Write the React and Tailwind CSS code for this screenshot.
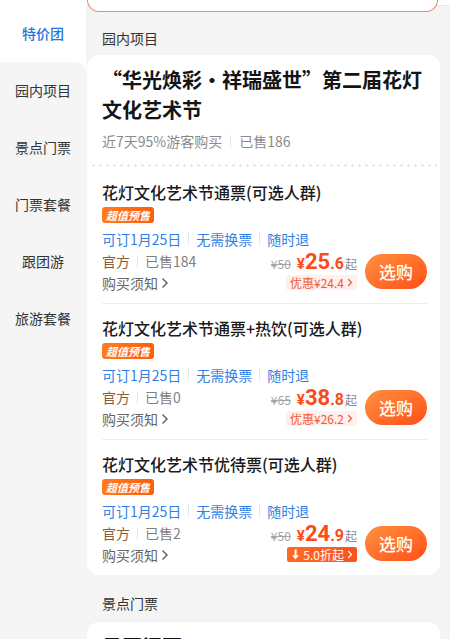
const font = "font-['Noto_Sans_CJK_SC','Noto_Sans',sans-serif]";

const menu = ['特价团', '园内项目', '景点门票', '门票套餐', '跟团游', '旅游套餐'];

const tickets = [
  { title: '花灯文化艺术节通票(可选人群)', sold: 184, orig: 50, int: '25', dec: '.6', deal: 'save', dealText: '优惠¥24.4' },
  { title: '花灯文化艺术节通票+热饮(可选人群)', sold: 0, orig: 65, int: '38', dec: '.8', deal: 'save', dealText: '优惠¥26.2' },
  { title: '花灯文化艺术节优待票(可选人群)', sold: 2, orig: 50, int: '24', dec: '.9', deal: 'off', dealText: '5.0折起' },
];

function Chevron({ className = '' }) {
  return (
    <svg viewBox="0 0 8 12" className={className} fill="none" stroke="currentColor" strokeWidth="1.6" strokeLinecap="round" strokeLinejoin="round">
      <path d="M2 2l4 4-4 4" />
    </svg>
  );
}

function Sidebar() {
  return (
    <div className="w-[86px] shrink-0 bg-white pt-[5px] flex flex-col">
      <div className="h-[57px] flex items-center justify-center text-[14px] font-medium text-[#1f76e0]">{menu[0]}</div>
      <div className="flex-1 bg-[#f5f5f5] rounded-tr-[12px]">
        {menu.slice(1).map((m) => (
          <div key={m} className="h-[57px] flex items-center justify-center text-[14px] text-[#333333]">{m}</div>
        ))}
      </div>
    </div>
  );
}

function Ticket({ t, last }) {
  return (
    <div className={last ? 'pt-[13px] pb-[9px]' : 'pt-[13px] pb-[9px] border-b border-[#eeeeee]'}>
      <div className="text-[16px] leading-[22px] font-medium text-[#1a1a1a]">{t.title}</div>
      <div className="mt-[4px] flex">
        <span className="h-[16px] px-[4px] rounded-[3px] bg-gradient-to-r from-[#ff7c1e] to-[#ff5c08] text-white text-[11px] leading-[16px] font-bold italic">超值预售</span>
      </div>
      <div className="mt-[6px] flex items-center text-[14px] leading-[20px] text-[#2f7fe4]">
        <span>可订1月25日</span>
        <span className="mx-[7px] w-px h-[12px] bg-[#dfe7f1]" />
        <span>无需换票</span>
        <span className="mx-[7px] w-px h-[12px] bg-[#dfe7f1]" />
        <span>随时退</span>
      </div>
      <div className="mt-[1px] flex items-start">
        <div className="flex-1 text-[14px] leading-[22px]">
          <div className="flex items-center">
            <span className="text-[#8d5c3a]">官方</span>
            <span className="mx-[7px] w-px h-[12px] bg-[#e2e2e2]" />
            <span className="text-[#808080]">已售{t.sold}</span>
          </div>
          <div className="flex items-center text-[#666666]">
            <span>购买须知</span>
            <Chevron className="w-[8px] h-[12px] ml-[3px]" />
          </div>
        </div>
        <div className="mt-[1px] flex flex-col items-end">
          <div className="flex items-baseline leading-[22px]">
            <span className="text-[12px] text-[#a3a3a3] line-through mr-[6px]">¥{t.orig}</span>
            <span className="font-['Roboto','Noto_Sans_CJK_SC',sans-serif] font-bold text-[#fd4a17] text-[15px]">¥</span>
            <span className="font-['Roboto','Noto_Sans_CJK_SC',sans-serif] font-bold text-[#fd4a17] text-[22px]">{t.int}</span>
            <span className="font-['Roboto','Noto_Sans_CJK_SC',sans-serif] font-bold text-[#fd4a17] text-[16px]">{t.dec}</span>
            <span className="text-[12px] text-[#8a8a8a] ml-[1px]">起</span>
          </div>
          {t.deal === 'save' ? (
            <div className="flex items-center h-[15px] px-[4px] rounded-[2px] bg-[#fff0eb] text-[12px] leading-[15px] text-[#f4582f]">
              <span>{t.dealText}</span>
              <Chevron className="w-[6px] h-[9px] ml-[3px]" />
            </div>
          ) : (
            <div className="flex items-center h-[15px] px-[4px] rounded-[2px] bg-gradient-to-r from-[#ff6a24] to-[#fb5220] text-[12px] leading-[15px] text-white">
              <svg viewBox="0 0 10 12" className="w-[9px] h-[11px] mr-[3px]" fill="currentColor">
                <path d="M4 0.5h2.2v6.2h2.6L5 11.5 1.2 6.7H4z" />
              </svg>
              <span>{t.dealText}</span>
              <Chevron className="w-[6px] h-[9px] ml-[3px]" />
            </div>
          )}
        </div>
        <button className="ml-[8px] mt-[4px] w-[62px] h-[35px] rounded-full bg-gradient-to-br from-[#ff8f3e] to-[#ff4d16] text-white text-[17px] font-medium">选购</button>
      </div>
    </div>
  );
}

export default function App() {
  return (
    <div className={`${font} w-[450px] h-[639px] overflow-hidden flex bg-[#f4f4f4]`}>
      <Sidebar />
      <div className="flex-1 min-w-0 pl-[1px] pr-[10px]">
        <div className="h-[12px] -mr-[10px] -ml-[1px] bg-[linear-gradient(to_bottom,#ffffff_0,#ffffff_5px,#e6e6e6_5px,#e6e6e6_6px,#f4f4f4_6px)]">
          <div className="ml-[1px] mr-[12px] h-[12px] bg-white border-x-[1.5px] border-b-[1.5px] border-[#f2876e] rounded-b-[12px]" />
        </div>
        <div className="mt-[16px] mb-[7px] pl-[15px] text-[14px] leading-[20px] text-[#333333]">园内项目</div>
        <div className="bg-white rounded-[12px]">
          <div className="pt-[10px] pb-[13px] px-[15px]">
            <div className="text-[20px] leading-[30px] font-bold text-[#141414]">“华光焕彩·祥瑞盛世”第二届花灯<br />文化艺术节</div>
            <div className="mt-[6px] flex items-center text-[14px] leading-[20px] text-[#8a8a8a]">
              <span>近7天95%游客购买</span>
              <span className="mx-[8px] w-px h-[12px] bg-[#e3e3e3]" />
              <span>已售186</span>
            </div>
          </div>
          <div className="mx-[3px] h-[3px] bg-[radial-gradient(circle,#e4e4e4_1px,transparent_1.3px)] bg-[length:7px_3px]" />
          <div className="pl-[15px] pr-[13px]">
            {tickets.map((t, i) => (
              <div key={t.title} className={i === 0 ? 'pt-[1px]' : ''}>
                <Ticket t={t} last={i === tickets.length - 1} />
              </div>
            ))}
          </div>
        </div>
        <div className="mt-[18px] mb-[9px] pl-[15px] text-[14px] leading-[20px] text-[#333333]">景点门票</div>
        <div className="bg-white rounded-[12px] pt-[10px] px-[15px] h-[80px]">
          <div className="text-[20px] leading-[30px] font-bold text-[#141414]">景区门票</div>
        </div>
      </div>
    </div>
  );
}
